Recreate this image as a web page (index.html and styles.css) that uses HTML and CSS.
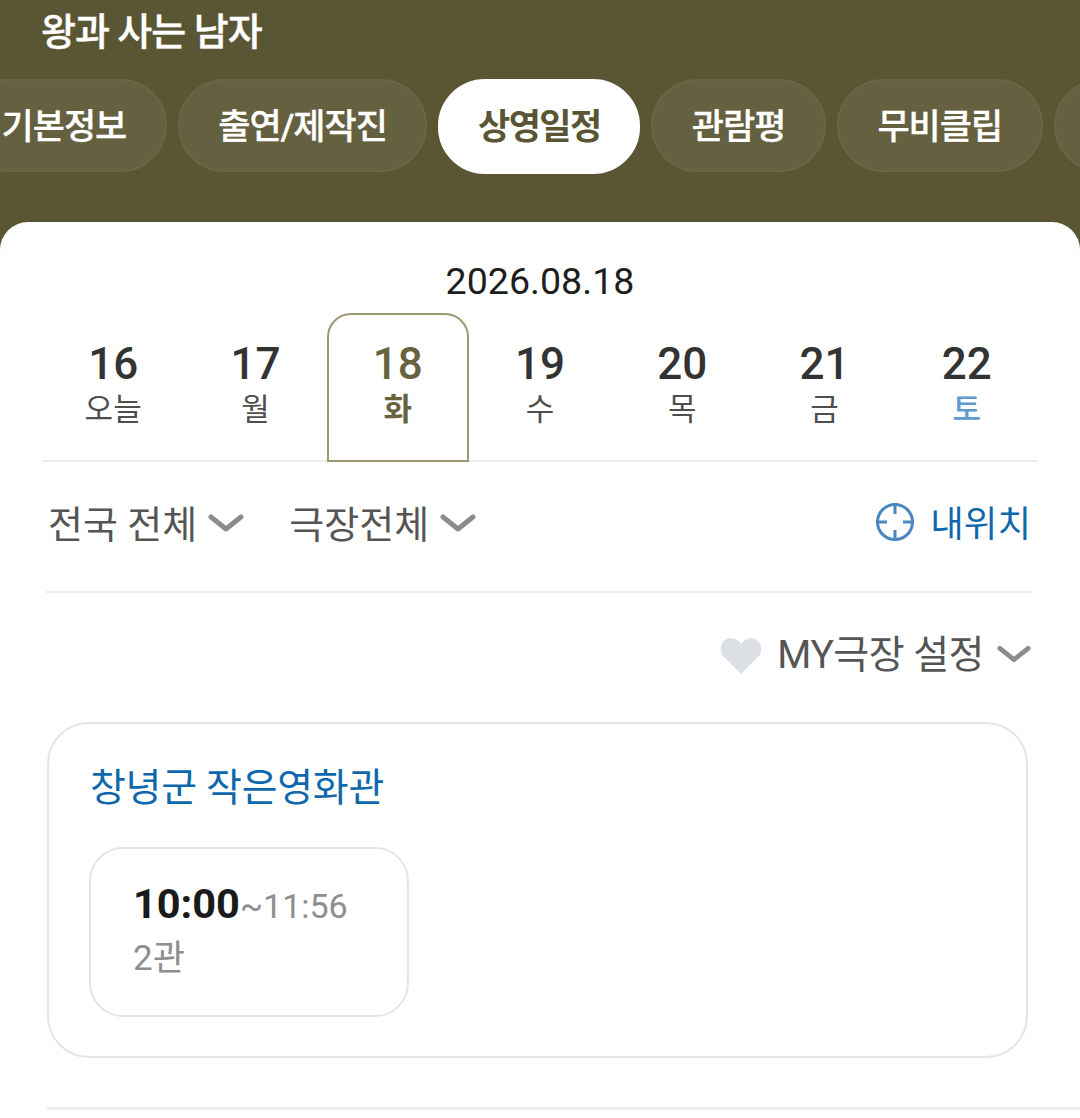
FILE: index.html
```html
<!DOCTYPE html>
<html lang="ko">
<head>
    <meta charset="UTF-8">
    <meta name="viewport" content="width=device-width, initial-scale=1.0">
    <title>왕과 사는 남자 - 상영일정</title>
    <link rel="stylesheet" href="styles.css">
</head>
<body>
    <header class="top">
        <h1 class="movie-title">왕과 사는 남자</h1>
        <nav class="tabs">
            <a class="tab tab-first">기본정보</a>
            <a class="tab">출연/제작진</a>
            <a class="tab active">상영일정</a>
            <a class="tab">관람평</a>
            <a class="tab">무비클립</a>
            <a class="tab tab-more"></a>
        </nav>
    </header>

    <main class="sheet">
        <div class="date-label">2026.08.18</div>
        <ul class="days">
            <li class="day"><b>16</b><span>오늘</span></li>
            <li class="day"><b>17</b><span>월</span></li>
            <li class="day selected"><b>18</b><span>화</span></li>
            <li class="day"><b>19</b><span>수</span></li>
            <li class="day"><b>20</b><span>목</span></li>
            <li class="day"><b>21</b><span>금</span></li>
            <li class="day sat"><b>22</b><span>토</span></li>
        </ul>

        <div class="filters">
            <button class="select select-region">전국 전체
                <svg class="chevron" viewBox="0 0 36 20"><path d="M3 4l15 12L33 4"/></svg>
            </button>
            <button class="select">극장전체
                <svg class="chevron" viewBox="0 0 36 20"><path d="M3 4l15 12L33 4"/></svg>
            </button>
            <button class="my-location">
                <svg class="target" viewBox="0 0 40 40">
                    <circle cx="20" cy="20" r="17.5"/>
                    <path d="M20 1v11M20 28v11M1 20h11M28 20h11"/>
                </svg>
                내위치
            </button>
        </div>

        <div class="my-row">
            <svg class="heart" viewBox="0 0 42 38"><path d="M21 37L4 20C-1 15 0 7 5 3c5-3 12-2 16 4 4-6 11-7 16-4 5 4 6 12 1 17z"/></svg>
            <span>MY극장 설정</span>
            <svg class="chevron" viewBox="0 0 36 20"><path d="M3 4l15 12L33 4"/></svg>
        </div>

        <section class="theater">
            <h2 class="theater-name">창녕군 작은영화관</h2>
            <div class="showtime">
                <div class="times"><strong>10:00</strong><span>~11:56</span></div>
                <div class="screen">2관</div>
            </div>
        </section>

        <div class="end-line"></div>
    </main>
</body>
</html>
```

FILE: styles.css
```css
* {
    box-sizing: border-box;
}
html, body {
    margin: 0;
    padding: 0;
}
body {
    width: 1080px;
    height: 1118px;
    overflow: hidden;
    background: #5a5533;
    font-family: Roboto, "Noto Sans CJK KR", sans-serif;
}
button {
    font-family: inherit;
    background: none;
    border: none;
    padding: 0;
}

/* header */
.top {
    height: 222px;
    overflow: hidden;
}
.movie-title {
    margin: 0;
    height: 79px;
    padding: 9px 0 0 41px;
    font-size: 38px;
    line-height: 46px;
    font-weight: 500;
    color: #fff;
    letter-spacing: -1px;
    -webkit-text-stroke: 0.4px #fff;
}
.tabs {
    display: flex;
    align-items: flex-start;
    gap: 11px;
    margin-left: -39px;
    width: 1300px;
}
.tab {
    height: 93px;
    padding: 0 38.5px;
    border-radius: 47px;
    border: 2px solid #6a6546;
    background: #65603f;
    color: #fff;
    font-size: 35px;
    font-weight: 500;
    line-height: 93px;
    letter-spacing: -1px;
    white-space: nowrap;
    -webkit-text-stroke: 0.3px #fff;
}
.tab.active {
    height: 95px;
    padding: 0 37.5px;
    line-height: 93px;
    background: #fff;
    border-color: #fff;
    color: #5a5533;
    font-weight: 700;
    letter-spacing: -1.5px;
    -webkit-text-stroke: 0;
}
.tab-more {
    width: 120px;
}

/* white sheet */
.sheet {
    background: #fff;
    height: 896px;
    border-radius: 28px 28px 0 0;
    padding-top: 36px;
}
.date-label {
    text-align: center;
    font-size: 37.6px;
    line-height: 46px;
    color: #1e1e1e;
}

/* date strip */
.days {
    list-style: none;
    display: grid;
    grid-template-columns: repeat(7, 1fr);
    margin: 9px 42px 0;
    padding: 0;
    height: 149px;
    border-bottom: 2px solid #e9eded;
}
.day {
    height: 149px;
    padding-top: 26px;
    text-align: center;
    color: #4e4e4e;
    border: 2px solid transparent;
    border-bottom: 0;
}
.day b {
    display: block;
    font-size: 44px;
    line-height: 46px;
    font-weight: 500;
    color: #333;
}
.day span {
    display: block;
    font-size: 31px;
    line-height: 45px;
}
.day.selected {
    border: 2px solid #9c9872;
    border-radius: 24px 24px 0 0;
}
.day.selected b,
.day.selected span {
    color: #68633f;
}
.day.selected span {
    font-weight: 700;
}
.day.sat span {
    color: #5f9ad0;
    font-weight: 500;
}

/* region filters */
.filters {
    display: flex;
    align-items: center;
    margin: 0 47px 0 46px;
    height: 131px;
    padding-bottom: 10px;
    border-bottom: 2px solid #eceeee;
}
.select {
    display: flex;
    align-items: center;
    gap: 11px;
    font-size: 38px;
    color: #555;
    white-space: nowrap;
}
.select-region {
    margin-left: 2px;
    margin-right: 45px;
}
.chevron {
    width: 36px;
    height: 20px;
    flex: none;
}
.select .chevron {
    margin-top: 3px;
}
.chevron path {
    fill: none;
    stroke: #8c8c8c;
    stroke-width: 5;
    stroke-linecap: round;
    stroke-linejoin: round;
}
.my-location {
    display: flex;
    align-items: center;
    gap: 15px;
    margin-left: auto;
    margin-right: 2px;
    font-size: 36.5px;
    color: #0f68ab;
    white-space: nowrap;
}
.target {
    width: 40px;
    height: 40px;
}
.target circle,
.target path {
    fill: none;
    stroke: #4a86c0;
    stroke-width: 3;
}

/* my theaters */
.my-row {
    display: flex;
    align-items: center;
    justify-content: flex-end;
    height: 124px;
    padding-bottom: 9px;
    margin-right: 49px;
    font-size: 39px;
    color: #555;
    letter-spacing: -0.5px;
}
.heart {
    width: 42px;
    height: 38px;
    margin: 10px 15px 0 0;
    fill: #dcdfe3;
}
.my-row .chevron {
    width: 34px;
    margin: 6px 0 0 13px;
}

/* theater card */
.theater {
    margin: 5px 52px 0 47px;
    height: 336px;
    padding: 39px 41px 0;
    border: 2px solid #e5e5e5;
    border-radius: 42px;
}
.theater-name {
    margin: 0 0 34px;
    font-size: 39px;
    line-height: 50px;
    font-weight: 400;
    color: #0f68ab;
    letter-spacing: -0.3px;
}
.showtime {
    width: 320px;
    height: 170px;
    margin-left: -1px;
    padding: 29px 42px 0;
    border: 2px solid #e5e5e5;
    border-radius: 34px;
}
.times strong {
    font-size: 41.5px;
    line-height: 52px;
    font-weight: 700;
    color: #1a1a1a;
}
.times span {
    font-size: 34px;
    color: #8e8e8e;
}
.screen {
    margin-top: 5px;
    font-size: 35px;
    line-height: 48px;
    color: #8e8e8e;
}
.end-line {
    height: 3px;
    margin: 49px 0 0 47px;
    background: #eeeeee;
}
```
